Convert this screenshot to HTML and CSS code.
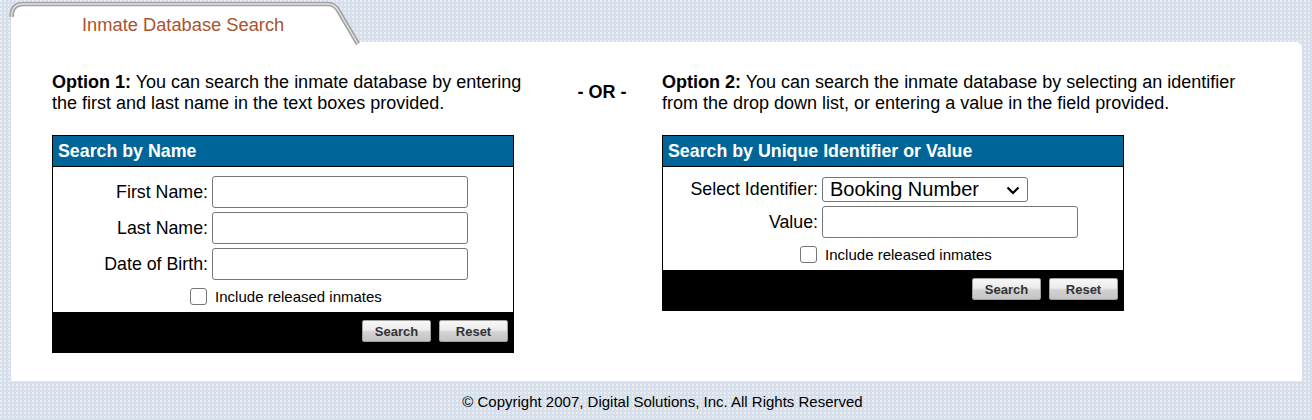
FILE: index.html
```html
<!DOCTYPE html>
<html lang="en">
<head>
<meta charset="utf-8">
<title>Inmate Database Search</title>
<link rel="stylesheet" href="styles.css">
</head>
<body>
<div class="page">
  <div class="tab">
    <svg class="tab-shape" width="360" height="44" viewBox="0 0 360 44">
      <path d="M0,44 L0,16 Q0,4 12,4 L317,4 Q323,4 327,10 L347,44 Z" fill="#ffffff"/>
      <path d="M0.5,17 Q0.5,4 12,4 L317,4 Q323,4 327,10 L347,44" fill="none" stroke="#a3a3a3" stroke-width="4.5"/>
      <path d="M0.5,17 Q0.5,4 12,4 L317,4 Q323,4 327,10 L347,44" fill="none" stroke="#e2e2e2" stroke-width="1.4"/>
    </svg>
    <div class="tab-title">Inmate Database Search</div>
  </div>
  <div class="panel">
    <div class="columns">
      <p class="option opt1"><b>Option 1:</b> You can search the inmate database by entering the first and last name in the text boxes provided.</p>
      <div class="or">- OR -</div>
      <p class="option opt2"><b>Option 2:</b> You can search the inmate database by selecting an identifier from the drop down list, or entering a value in the field provided.</p>

      <div class="box">
        <div class="box-head">Search by Name</div>
        <div class="box-body">
          <label class="lbl">First Name:</label>
          <div class="field"><input type="text" class="txt"></div>
          <label class="lbl">Last Name:</label>
          <div class="field"><input type="text" class="txt"></div>
          <label class="lbl">Date of Birth:</label>
          <div class="field"><input type="text" class="txt"></div>
          <div class="check-row"><input type="checkbox" class="chk"><span>Include released inmates</span></div>
        </div>
        <div class="box-foot">
          <button class="btn">Search</button>
          <button class="btn">Reset</button>
        </div>
      </div>
      <div class="spacer"></div>
      <div class="box">
        <div class="box-head">Search by Unique Identifier or Value</div>
        <div class="box-body">
          <label class="lbl">Select Identifier:</label>
          <div class="field sel-row">
            <div class="sel-wrap">
              <select class="sel"><option>Booking Number</option></select>
              <svg class="chev" width="14" height="9" viewBox="0 0 14 9"><path d="M1.5,1.5 L7,7 L12.5,1.5" fill="none" stroke="#000" stroke-width="2.2"/></svg>
            </div>
          </div>
          <label class="lbl">Value:</label>
          <div class="field"><input type="text" class="txt"></div>
          <div class="check-row"><input type="checkbox" class="chk"><span>Include released inmates</span></div>
        </div>
        <div class="box-foot">
          <button class="btn">Search</button>
          <button class="btn">Reset</button>
        </div>
      </div>
    </div>
  </div>
  <div class="copyright">© Copyright 2007, Digital Solutions, Inc. All Rights Reserved</div>
</div>
</body>
</html>
```

FILE: styles.css
```css
html, body {
  margin: 0;
  padding: 0;
}
body {
  font-family: "Liberation Sans", Arial, sans-serif;
  color: #000;
  background-color: #d6dfea;
  background-image:
    linear-gradient(90deg, transparent 2px, #d6dfea 2px),
    linear-gradient(180deg, transparent 2px, #d6dfea 2px),
    linear-gradient(#e8edf4, #e8edf4);
  background-size: 4px 4px;
  height: 420px;
  overflow: hidden;
}
.page {
  padding: 0 10px 0 11px;
}
.tab {
  position: relative;
  width: 352px;
  height: 42px;
}
.tab-shape {
  position: absolute;
  left: 0;
  top: 0;
  overflow: visible;
}
.tab-title {
  position: relative;
  padding: 15px 0 0 71px;
  font-size: 18.3px;
  line-height: 20.5px;
  color: #a9532d;
}
.panel {
  background: #fff;
  border-top-right-radius: 6px;
  padding: 30px 0 28px 41px;
}
.columns {
  display: grid;
  grid-template-columns: 490px 120px 600px;
  row-gap: 22px;
  align-items: start;
}
.option {
  margin: 0;
  font-size: 18px;
  line-height: 20.5px;
}
.or {
  align-self: center;
  text-align: center;
  font-weight: bold;
  font-size: 18px;
  line-height: 20.5px;
}
.box {
  width: 462px;
  box-sizing: border-box;
  border: 1px solid #000;
  background: #fff;
}
.box-head {
  background: #006699;
  color: #fff;
  font-weight: bold;
  font-size: 17.8px;
  height: 30px;
  line-height: 30px;
  padding-left: 5px;
  border-bottom: 1px solid #000;
}
.box-body {
  display: grid;
  grid-template-columns: 159px 1fr;
  row-gap: 4px;
  align-items: center;
  padding: 9px 0 4px;
}
.lbl {
  text-align: right;
  padding-right: 4px;
  font-size: 17.8px;
  line-height: 20.5px;
}
.field {
  display: flex;
  align-items: center;
}
.txt {
  width: 256px;
  height: 32px;
  box-sizing: border-box;
  border: 1px solid #767676;
  border-radius: 3px;
  margin: 0;
  padding: 0 4px;
  font-family: "Liberation Sans", Arial, sans-serif;
  font-size: 16px;
  background: #fff;
}
.sel-row {
  height: 26px;
}
.sel-wrap {
  position: relative;
  width: 206px;
  height: 25px;
  margin-top: 1px;
}
.sel {
  -webkit-appearance: none;
  appearance: none;
  width: 206px;
  height: 25px;
  box-sizing: border-box;
  border: 1px solid #767676;
  border-radius: 3px;
  margin: 0;
  padding: 0 0 0 7px;
  font-family: "Liberation Sans", Arial, sans-serif;
  font-size: 20px;
  line-height: 23px;
  color: #000;
  background: #fff;
}
.chev {
  position: absolute;
  right: 8px;
  top: 9px;
  pointer-events: none;
}
.check-row {
  grid-column: 1 / -1;
  justify-self: center;
  display: flex;
  align-items: center;
  gap: 8px;
  height: 24px;
  padding-left: 6px;
  font-size: 15px;
}
.chk {
  -webkit-appearance: none;
  appearance: none;
  width: 17px;
  height: 17px;
  margin: 0;
  box-sizing: border-box;
  border: 1px solid #767676;
  border-radius: 3px;
  background: #fff;
}
.box-foot {
  background: #000;
  height: 40px;
  box-sizing: border-box;
  display: flex;
  justify-content: flex-end;
  align-items: flex-start;
  gap: 8px;
  padding: 8px 5px 0 0;
}
.btn {
  width: 69px;
  height: 22px;
  box-sizing: border-box;
  margin: 0;
  padding: 0;
  border: 1px solid #a0a0a0;
  border-radius: 2px;
  background: linear-gradient(180deg, #f8f8f8 0%, #ebebeb 45%, #d2d2d2 55%, #c4c4c4 100%);
  font-family: "Liberation Sans", Arial, sans-serif;
  font-weight: bold;
  font-size: 13px;
  color: #333;
}
.copyright {
  text-align: center;
  font-size: 15px;
  line-height: 17px;
  padding: 12px 0 0 12px;
}
```
